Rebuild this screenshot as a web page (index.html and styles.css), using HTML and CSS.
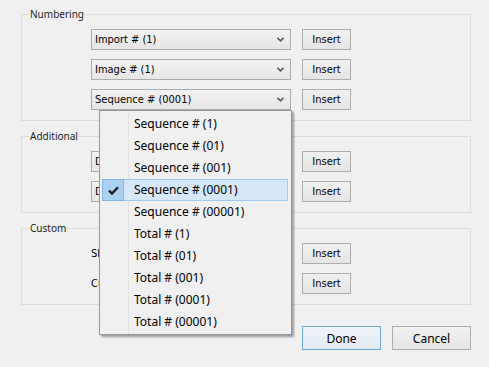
FILE: index.html
```html
<!DOCTYPE html>
<html>
<head>
<meta charset="utf-8">
<link rel="stylesheet" href="styles.css">
</head>
<body>
<div class="dialog">
  <fieldset class="group">
    <legend>Numbering</legend>
    <div class="row">
      <div class="combo"><span>Import # (1)</span><svg class="chev" width="7" height="5" viewBox="0 0 7 5"><path d="M0.5 0.8 L3.5 3.8 L6.5 0.8" fill="none" stroke="#5a5a5a" stroke-width="1.6"/></svg></div>
      <button class="btn">Insert</button>
    </div>
    <div class="row">
      <div class="combo"><span>Image # (1)</span><svg class="chev" width="7" height="5" viewBox="0 0 7 5"><path d="M0.5 0.8 L3.5 3.8 L6.5 0.8" fill="none" stroke="#5a5a5a" stroke-width="1.6"/></svg></div>
      <button class="btn">Insert</button>
    </div>
    <div class="row">
      <div class="combo"><span>Sequence # (0001)</span><svg class="chev" width="7" height="5" viewBox="0 0 7 5"><path d="M0.5 0.8 L3.5 3.8 L6.5 0.8" fill="none" stroke="#5a5a5a" stroke-width="1.6"/></svg></div>
      <button class="btn">Insert</button>
    </div>
  </fieldset>

  <fieldset class="group">
    <legend>Additional</legend>
    <div class="row">
      <div class="combo"><span>Date</span><svg class="chev" width="7" height="5" viewBox="0 0 7 5"><path d="M0.5 0.8 L3.5 3.8 L6.5 0.8" fill="none" stroke="#5a5a5a" stroke-width="1.6"/></svg></div>
      <button class="btn">Insert</button>
    </div>
    <div class="row">
      <div class="combo"><span>Day</span><svg class="chev" width="7" height="5" viewBox="0 0 7 5"><path d="M0.5 0.8 L3.5 3.8 L6.5 0.8" fill="none" stroke="#5a5a5a" stroke-width="1.6"/></svg></div>
      <button class="btn">Insert</button>
    </div>
  </fieldset>

  <fieldset class="group">
    <legend>Custom</legend>
    <div class="row">
      <div class="field"><span class="label">Shoot</span><span class="input"></span></div>
      <button class="btn">Insert</button>
    </div>
    <div class="row">
      <div class="field"><span class="label">Custom</span><span class="input"></span></div>
      <button class="btn">Insert</button>
    </div>
  </fieldset>

  <div class="actions">
    <button class="btn big default">Done</button>
    <button class="btn big">Cancel</button>
  </div>

  <ul class="menu">
    <li>Sequence # (1)</li>
    <li>Sequence # (01)</li>
    <li>Sequence # (001)</li>
    <li class="selected"><span class="check"><svg width="11" height="9" viewBox="0 0 11 9"><path d="M1 4.6 L4 7.6 L10 1.2" fill="none" stroke="#1a1a1a" stroke-width="2.2"/></svg></span>Sequence # (0001)</li>
    <li>Sequence # (00001)</li>
    <li>Total # (1)</li>
    <li>Total # (01)</li>
    <li>Total # (001)</li>
    <li>Total # (0001)</li>
    <li>Total # (00001)</li>
  </ul>
</div>
</body>
</html>
```

FILE: styles.css
```css
html, body {
  margin: 0;
  padding: 0;
  background: #f0f0f0;
}

.dialog {
  position: relative;
  width: 489px;
  height: 367px;
  box-sizing: border-box;
  padding: 8px 0 0 21px;
  font-family: "DejaVu Sans Condensed", "Liberation Sans", sans-serif;
  font-size: 11px;
  color: #000;
}

.group {
  width: 450px;
  box-sizing: border-box;
  margin: 0 0 9px 0;
  padding: 8px 10px 10px 69px;
  border: 1px solid #dcdcdc;
  display: flex;
  flex-direction: column;
  gap: 9px;
}

.group legend {
  font-family: "Noto Sans", "Liberation Sans", sans-serif;
  font-size: 10px;
  line-height: 13px;
  height: 13px;
  padding: 0 1px;
  margin-left: -62px;
  color: #1e1e1e;
}

.row {
  display: flex;
  align-items: center;
  gap: 11px;
  height: 21px;
}

.combo {
  width: 200px;
  height: 21px;
  box-sizing: border-box;
  border: 1px solid #acacac;
  background: linear-gradient(#f2f2f2, #e6e6e6);
  display: flex;
  align-items: center;
  justify-content: space-between;
  padding: 0 5px 0 3px;
}

.chev {
  display: block;
  margin-right: 1px;
}

.field {
  width: 200px;
  height: 21px;
  display: flex;
  align-items: center;
}

.field .label {
  width: 80px;
}

.field .input {
  flex: 1;
  height: 19px;
  border: 1px solid #abadb3;
  background: #fff;
}

.btn {
  font-family: "DejaVu Sans Condensed", "Liberation Sans", sans-serif;
  font-size: 11px;
  color: #000;
  width: 49px;
  height: 21px;
  box-sizing: border-box;
  border: 1px solid #adadad;
  background: linear-gradient(#f0f0f0, #e5e5e5);
  padding: 0;
  margin: 0;
}

.actions {
  display: flex;
  justify-content: flex-end;
  gap: 11px;
  width: 450px;
  margin-top: 21px;
}

.btn.big {
  width: 79px;
  height: 24px;
  font-family: "Noto Sans", "Liberation Sans", sans-serif;
  font-size: 12px;
}

.btn.default {
  border-color: #6fa6d6;
  background: linear-gradient(#eef3f8, #e3ebf3);
}

.menu {
  position: absolute;
  left: 99px;
  top: 110px;
  width: 193px;
  box-sizing: border-box;
  margin: 0;
  padding: 2px 2px 1px 2px;
  list-style: none;
  background: #f0f0f0;
  border: 1px solid #979797;
  box-shadow: 2px 2px 2px rgba(0, 0, 0, 0.35);
  font-family: "Noto Sans", "Liberation Sans", sans-serif;
  font-size: 12px;
  background-image: linear-gradient(#e2e3e3, #e2e3e3);
  background-size: 1px 100%;
  background-position: 28px 0;
  background-repeat: no-repeat;
}

.menu li {
  position: relative;
  height: 22px;
  line-height: 22px;
  padding-left: 32px;
  margin-right: 1px;
  box-sizing: border-box;
  color: #000;
}

.menu li.selected {
  background: #d5e7f8;
  border: 1px solid #9fcaef;
  line-height: 20px;
  padding-left: 31px;
}

.check {
  position: absolute;
  left: -1px;
  top: -1px;
  width: 22px;
  height: 22px;
  box-sizing: border-box;
  background: #abd0f0;
  border: 1px solid #84b6e3;
  display: flex;
  align-items: center;
  justify-content: center;
}

.check svg {
  display: block;
}
```
